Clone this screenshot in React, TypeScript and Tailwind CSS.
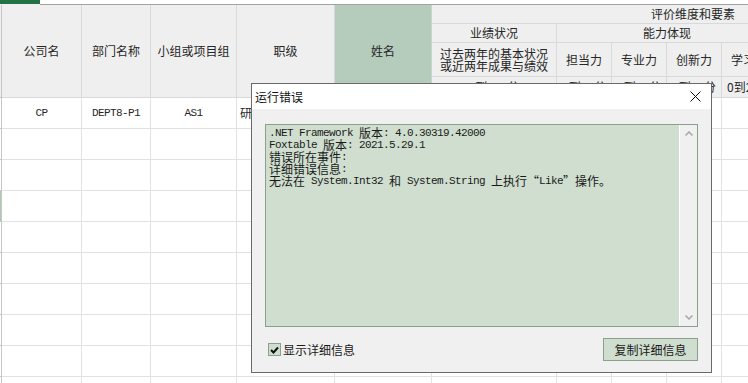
import React from "react";

const COLS = "grid-cols-[2px_80px_69px_86px_98px_97px_125px_55px_55px_55px_55px]";

const M = ({ children }: { children: React.ReactNode }) => (
  <span className="font-['Liberation_Mono',monospace] text-[11px] leading-[12px] tracking-[-0.6px] whitespace-pre">{children}</span>
);
const C = ({ children }: { children: React.ReactNode }) => (
  <span className="font-['Noto_Sans_CJK_SC',sans-serif] text-[12px] leading-[12px] whitespace-pre">{children}</span>
);
const Line = ({ children }: { children: React.ReactNode }) => (
  <div className="h-[12px] flex items-center">{children}</div>
);

function HeaderCell({ children, className = "" }: { children?: React.ReactNode; className?: string }) {
  return (
    <div className={`border-r border-b border-[#d9d9d9] flex items-center justify-center text-center ${className}`}>
      {children}
    </div>
  );
}

function DataRow({ idx }: { idx: number }) {
  const first = idx === 0;
  const cell = "border-r border-b border-[#e2e2e2] flex items-center";
  return (
    <div className={`grid ${COLS} h-[31px] w-[777px] bg-white`}>
      <div className={`border-r border-b border-[#c6c6c6] ${idx === 3 ? "bg-[#a9cbb6]" : ""}`} />
      <div className={`${cell} justify-center`}>{first && <M>CP</M>}</div>
      <div className={`${cell} justify-center`}>{first && <M>DEPT8-P1</M>}</div>
      <div className={`${cell} justify-center`}>{first && <M>AS1</M>}</div>
      <div className={`${cell} pl-[3px]`}>{first && <C>研发部</C>}</div>
      <div className={cell} />
      <div className={cell} />
      <div className={cell} />
      <div className={cell} />
      <div className={cell} />
      <div className={cell} />
    </div>
  );
}

export default function App() {
  return (
    <div className="relative w-[748px] h-[383px] overflow-hidden bg-white font-['Noto_Sans_CJK_SC',sans-serif] text-[#262626]">
      {/* top strip */}
      <div className="flex h-[5px] bg-[#efefef]">
        <div className="w-[40px] h-[4px] bg-[#217346]" />
        <div className="flex-1 h-[5px] bg-white border-b border-[#a3a3a3]" />
      </div>

      {/* header */}
      <div className={`grid ${COLS} grid-rows-[19px_19px_34px_21px] w-[777px] bg-[#efefef] text-[12px] leading-[12px]`}>
        <div className="row-span-4 border-r border-b border-[#c6c6c6]" />
        <HeaderCell className="row-span-4">公司名</HeaderCell>
        <HeaderCell className="row-span-4">部门名称</HeaderCell>
        <HeaderCell className="row-span-4">小组或项目组</HeaderCell>
        <HeaderCell className="row-span-4">职级</HeaderCell>
        <HeaderCell className="row-span-4 bg-[#b5cbbc] border-r-[#c4d6ca]">姓名</HeaderCell>
        <div className="col-span-5 border-b border-[#d9d9d9] flex items-center pl-[219px]">评价维度和要素</div>
        <HeaderCell>业绩状况</HeaderCell>
        <div className="col-span-4 border-b border-[#d9d9d9] flex items-center justify-center">能力体现</div>
        <HeaderCell>
          <span className="leading-[12px]">
            过去两年的基本状况
            <br />
            或近两年成果与绩效
          </span>
        </HeaderCell>
        <HeaderCell>担当力</HeaderCell>
        <HeaderCell>专业力</HeaderCell>
        <HeaderCell>创新力</HeaderCell>
        <HeaderCell>学习力</HeaderCell>
        <HeaderCell>0到100分</HeaderCell>
        <HeaderCell>0到25分</HeaderCell>
        <HeaderCell>0到25分</HeaderCell>
        <HeaderCell>0到25分</HeaderCell>
        <HeaderCell>0到25分</HeaderCell>
      </div>

      {/* data rows */}
      {Array.from({ length: 10 }).map((_, i) => (
        <DataRow key={i} idx={i} />
      ))}

      {/* dialog */}
      <div className="absolute left-[251px] top-[83px] w-[461px] h-[290px] border border-[#6a6a6a] bg-[#f0f0f0] flex flex-col">
        <div className="h-[25px] bg-white flex items-center justify-between pl-[3px] pr-[10px]">
          <span className="text-[12px] leading-[12px] text-[#111]">运行错误</span>
          <svg width="11" height="11" viewBox="0 0 11 11">
            <path d="M0.5 0.5 L10.5 10.5 M10.5 0.5 L0.5 10.5" stroke="#111" strokeWidth="1" fill="none" />
          </svg>
        </div>
        <div className="flex-1 flex flex-col px-[13px] pt-[15px]">
          <div className="h-[203px] border border-[#8c9e8e] bg-[#cfdecf] flex">
            <div className="flex-1 pl-[3px] pt-[2px] text-[#1a1a1a]">
              <Line>
                <M>.NET Framework </M>
                <C>版本</C>
                <M>: 4.0.30319.42000</M>
              </Line>
              <Line>
                <M>Foxtable </M>
                <C>版本</C>
                <M>: 2021.5.29.1</M>
              </Line>
              <Line>
                <C>错误所在事件</C>
                <M>:</M>
              </Line>
              <Line>
                <C>详细错误信息</C>
                <M>:</M>
              </Line>
              <Line>
                <C>无法在</C>
                <M> System.Int32 </M>
                <C>和</C>
                <M> System.String </M>
                <C>上执行“</C>
                <M>Like</M>
                <C>”操作。</C>
              </Line>
            </div>
            <div className="w-[18px] border-l border-white bg-[#f0f0f0] flex flex-col items-center justify-between pt-[6px] pb-[6px]">
              <svg width="8" height="5" viewBox="0 0 8 5">
                <polyline points="0.5,4.5 4,1 7.5,4.5" stroke="#a6a6a6" strokeWidth="1.5" fill="none" />
              </svg>
              <svg width="8" height="5" viewBox="0 0 8 5">
                <polyline points="0.5,0.5 4,4 7.5,0.5" stroke="#a6a6a6" strokeWidth="1.5" fill="none" />
              </svg>
            </div>
          </div>
          <div className="flex items-center justify-between pt-[11px]">
            <div className="flex items-center pl-[3px] gap-[2px]">
              <div className="w-[13px] h-[13px] border border-[#8c9e8e] bg-[#cfdecf] flex items-center justify-center">
                <svg width="9" height="8" viewBox="0 0 9 8">
                  <polyline points="1,4 3.5,6.5 8,1.5" stroke="#111" strokeWidth="2" fill="none" />
                </svg>
              </div>
              <span className="text-[12px] leading-[12px] text-[#1a1a1a]">显示详细信息</span>
            </div>
            <div className="w-[95px] h-[23px] border border-[#8c9e8e] bg-[#cfdecf] flex items-center justify-center text-[12px] leading-[12px] text-[#1a1a1a]">
              复制详细信息
            </div>
          </div>
        </div>
      </div>
    </div>
  );
}
